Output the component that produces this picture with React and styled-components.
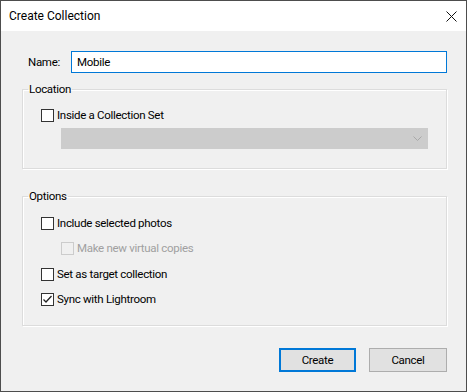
import React from "react";
import styled, { createGlobalStyle } from "styled-components";

const GlobalStyle = createGlobalStyle`
  html, body {
    margin: 0;
    padding: 0;
    background: #2b2b2b;
  }
  body {
    font-family: Roboto, "Noto Sans", "Liberation Sans", sans-serif;
    font-size: 11.5px;
    color: #000;
  }
`;

const Window = styled.div`
  width: 467px;
  height: 392px;
  box-sizing: border-box;
  border: 1px solid #4d4d4d;
  display: flex;
  flex-direction: column;
  background: #f0f0f0;
`;

const TitleBar = styled.div`
  height: 30px;
  flex: none;
  background: #fff;
  display: flex;
  align-items: center;
  justify-content: space-between;
  padding: 0 7px 0 8px;
`;

const Title = styled.span`
  font-size: 12px;
  color: #000;
`;

const Close = styled.button`
  width: 16px;
  height: 16px;
  border: 0;
  padding: 0;
  background: transparent;
  display: flex;
  align-items: center;
  justify-content: center;
`;

const Body = styled.div`
  flex: 1;
  display: flex;
  flex-direction: column;
  padding: 20px 19px 0 21px;
  letter-spacing: -0.3px;
`;

const NameRow = styled.div`
  display: flex;
  align-items: center;
  padding-left: 6px;
`;

const NameLabel = styled.label`
  width: 43px;
  flex: none;
  line-height: 16px;
  white-space: nowrap;
`;

const TextInput = styled.input`
  flex: 1;
  height: 22px;
  box-sizing: border-box;
  border: 1px solid #0078d7;
  background: #fff;
  padding: 0 5px;
  font: inherit;
  letter-spacing: inherit;
  outline: none;
`;

const Group = styled.fieldset`
  margin: ${(p) => p.$top}px 0 0 0;
  padding: ${(p) => p.$pad};
  min-width: 0;
  border: 1px solid #dcdcdc;
  box-shadow: inset 1px 1px 0 #fff, 1px 1px 0 #fff;
  display: flex;
  flex-direction: column;
  gap: ${(p) => p.$gap || 0}px;
`;

const Legend = styled.legend`
  padding: 0 1px;
  margin-left: -13px;
  line-height: 16px;
`;

const Row = styled.div`
  display: flex;
  align-items: center;
  gap: 3px;
  height: 16px;
  padding-left: ${(p) => p.$indent || 0}px;
  color: ${(p) => (p.$disabled ? "#a0a0a0" : "#000")};
  margin-bottom: ${(p) => p.$extra || 0}px;
`;

const Box = styled.span`
  width: 13px;
  height: 13px;
  box-sizing: border-box;
  border: 1px solid ${(p) => (p.$disabled ? "#cccccc" : "#333333")};
  background: ${(p) => (p.$disabled ? "#f0f0f0" : "#fff")};
  display: flex;
  align-items: center;
  justify-content: center;
  flex: none;
`;

const Select = styled.div`
  margin-left: 20px;
  width: 367px;
  height: 21px;
  background: #cccccc;
  border: 1px solid #cccccc;
  box-sizing: border-box;
  display: flex;
  align-items: center;
  justify-content: flex-end;
  padding-right: 5px;
`;

const Footer = styled.div`
  display: flex;
  justify-content: flex-end;
  gap: 13px;
  margin-top: 22px;
`;

const Button = styled.button`
  width: ${(p) => p.$w}px;
  height: 24px;
  box-sizing: border-box;
  background: #e1e1e1;
  border: ${(p) => (p.$primary ? "2px solid #0078d7" : "1px solid #adadad")};
  font: inherit;
  letter-spacing: inherit;
  color: #000;
  padding: 0;
`;

const Check = ({ checked, disabled, indent, extra, children }) => (
  <Row $indent={indent} $disabled={disabled} $extra={extra}>
    <Box $disabled={disabled}>
      {checked && (
        <svg width="11" height="11" viewBox="0 0 11 11">
          <path d="M1.5 5.5 L4 8 L9.5 2" fill="none" stroke="#222" strokeWidth="1.3" />
        </svg>
      )}
    </Box>
    <span>{children}</span>
  </Row>
);

export default function App() {
  return (
    <>
      <GlobalStyle />
      <Window>
        <TitleBar>
          <Title>Create Collection</Title>
          <Close aria-label="Close">
            <svg width="11" height="11" viewBox="0 0 11 11">
              <path d="M0.5 0.5 L10.5 10.5 M10.5 0.5 L0.5 10.5" stroke="#111" strokeWidth="1" />
            </svg>
          </Close>
        </TitleBar>
        <Body>
          <NameRow>
            <NameLabel>Name:</NameLabel>
            <TextInput defaultValue="Mobile" />
          </NameRow>
          <Group $top={8} $pad="10px 18px 19px 18px" $gap={5}>
            <Legend>Location</Legend>
            <Check>Inside a Collection Set</Check>
            <Select>
              <svg width="9" height="5" viewBox="0 0 9 5">
                <path d="M0.5 0.5 L4.5 4.5 L8.5 0.5" fill="none" stroke="#a8a8a8" strokeWidth="1" />
              </svg>
            </Select>
          </Group>
          <Group $top={19} $pad="11px 18px 18px 18px" $gap={9}>
            <Legend>Options</Legend>
            <Check>Include selected photos</Check>
            <Check disabled indent={20} extra={1}>Make new virtual copies</Check>
            <Check>Set as target collection</Check>
            <Check checked>Sync with Lightroom</Check>
          </Group>
          <Footer>
            <Button $primary $w={77}>Create</Button>
            <Button $w={78}>Cancel</Button>
          </Footer>
        </Body>
      </Window>
    </>
  );
}
